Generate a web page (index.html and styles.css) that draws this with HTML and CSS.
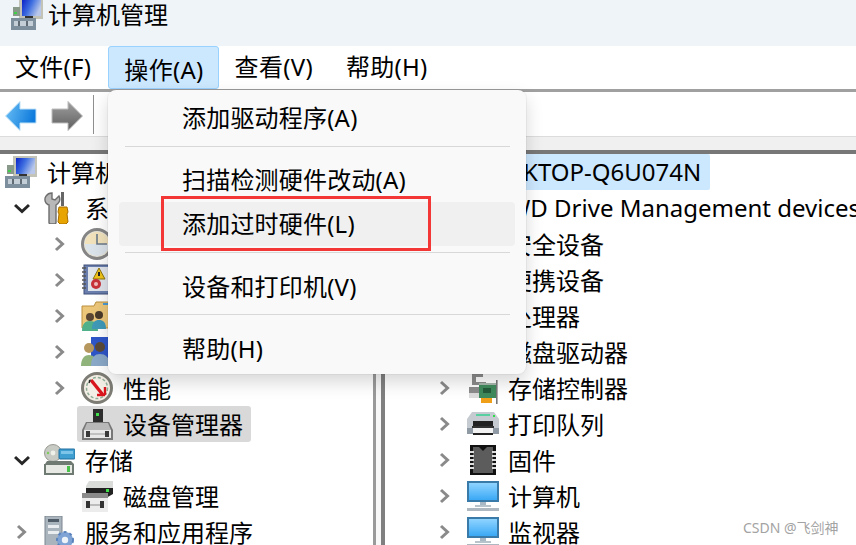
FILE: index.html
```html
<!DOCTYPE html>
<html lang="zh-CN">
<head>
<meta charset="utf-8">
<title>计算机管理</title>
<link rel="stylesheet" href="styles.css">
</head>
<body>
<svg class="defs" width="0" height="0" aria-hidden="true">
  <defs>
    <linearGradient id="scr" x1="0" y1="0" x2="1" y2="0.4"><stop offset="0" stop-color="#0a22c8"/><stop offset=".5" stop-color="#3f6fe0"/><stop offset="1" stop-color="#b9c8ea"/></linearGradient>
    <linearGradient id="mon" x1="0" y1="0" x2="0" y2="1"><stop offset="0" stop-color="#8fd3ff"/><stop offset="1" stop-color="#3aa9f5"/></linearGradient>
    <linearGradient id="arB" x1="0" y1="0" x2="1" y2="0.3"><stop offset="0" stop-color="#6cc0f5"/><stop offset="1" stop-color="#0f7bdc"/></linearGradient>
    <linearGradient id="arG" x1="0" y1="0" x2="0" y2="1"><stop offset="0" stop-color="#a0a0a0"/><stop offset="1" stop-color="#5e5e5e"/></linearGradient>
    <symbol id="i-back" viewBox="0 0 32 32"><path d="M.5 16 15 1.5V9h16v14H15v7.500z" fill="url(#arB)" stroke="#c2e2f7" stroke-width="1"/></symbol>
    <symbol id="i-fwd" viewBox="0 0 32 32"><path d="M31.500 16 17 1.500V9H1v14h16v7.500z" fill="url(#arG)" stroke="#bdbdbd" stroke-width="1"/></symbol>
    <symbol id="i-computer" viewBox="0 0 32 32">
      <rect x="8" y="0" width="24" height="21" fill="#c3c3b8"/><rect x="11" y="2" width="19" height="16" fill="url(#scr)"/>
      <rect x="2" y="9" width="7" height="9" fill="#8a9a8a"/><rect x="3" y="14" width="3" height="2" fill="#3fd04a"/>
      <rect x="14" y="18" width="8" height="3" fill="#333"/>
      <rect x="0" y="20" width="25" height="12" fill="#7d8f9c"/><rect x="3" y="23" width="19" height="5" fill="#c3ced6"/><rect x="7" y="23" width="2" height="5" fill="#5f6c75"/><rect x="15" y="23" width="2" height="5" fill="#5f6c75"/>
    </symbol>
    <symbol id="i-tools" viewBox="0 0 32 32">
      <path d="M7 32h5a2 2 0 0 0 1-2V13c3-2 5-5 3-9l-4 4-3-1V1C4 1 0 6 3 11c1 1 2 2 3 2v17a2 2 0 0 0 1 2z" fill="#b8b8b8" stroke="#6d6d6d" stroke-width="1.4"/>
      <rect x="18" y="0" width="3" height="14" fill="#666"/><path d="M16 15h8l1 5-1 2 1 8-2 2h-6l-2-2 1-8-1-2z" fill="#e8a400" stroke="#a86f00"/>
    </symbol>
    <symbol id="i-clock" viewBox="0 0 32 32">
      <circle cx="16" cy="16" r="14.500" fill="#e8e4d8" stroke="#858585" stroke-width="3"/><circle cx="16" cy="16" r="12" fill="#f1e2bb"/><path d="M4 16a12 12 0 0 0 24 0z" fill="#dbe3ea"/>
      <path d="M16 6v10h10" fill="none" stroke="#6b7a88" stroke-width="1.6"/>
    </symbol>
    <symbol id="i-log" viewBox="0 0 32 32">
      <rect x="3" y="1" width="27" height="29" fill="#6a7fae" stroke="#3f4f78"/><rect x="7" y="3" width="21" height="24" fill="#dfe3ea"/>
      <path d="M1 4h4M1 8h4M1 12h4M1 16h4M1 20h4M1 24h4" stroke="#555" stroke-width="1.5"/>
      <path d="M18 4l6 11H12z" fill="#f0c419" stroke="#8a7310"/><rect x="17" y="8" width="2" height="4" fill="#222"/>
      <circle cx="15" cy="20" r="5" fill="#c8323a"/><circle cx="15" cy="20" r="2" fill="#f0c0c0"/>
    </symbol>
    <symbol id="i-shared" viewBox="0 0 32 32">
      <path d="M1 6h12l2-4h16v26H1z" fill="#ecc77a" stroke="#b98f3c"/><rect x="22" y="3" width="6" height="2" fill="#4a9ad4"/>
      <circle cx="9" cy="17" r="4" fill="#5a4632"/><path d="M1 31c0-7 3-10 8-10s8 3 8 10z" fill="#4fb08a"/>
      <circle cx="18" cy="15" r="4" fill="#4a3a2a"/><path d="M11 29c0-7 3-9 7-9s7 2 7 9z" fill="#3f9ab8"/>
    </symbol>
    <symbol id="i-users" viewBox="0 0 32 32">
      <path d="M10 1h20v22H10z" fill="#2f56c8"/><circle cx="8" cy="12" r="5" fill="#b6985f"/><path d="M0 30c0-8 4-11 8-11s8 3 8 11z" fill="#8fb37a"/>
      <circle cx="19" cy="11" r="5" fill="#5b4a38"/><path d="M10 30c0-9 4-12 9-12s10 3 10 12z" fill="#8aa8c8"/>
    </symbol>
    <symbol id="i-perf" viewBox="0 0 32 32">
      <circle cx="16" cy="16" r="14.500" fill="#f4efe6" stroke="#7d7d75" stroke-width="3"/><circle cx="16" cy="16" r="10.500" fill="none" stroke="#8fae98" stroke-width="1.5" stroke-dasharray="3 2"/>
      <path d="M10 8l12 15" stroke="#d8141c" stroke-width="3.400"/><path d="M24 23v-8M24 23h-8" stroke="#d8141c" stroke-width="2.400" fill="none"/><path d="M9 8l-1 3" stroke="#222" stroke-width="1.500"/>
    </symbol>
    <symbol id="i-devmgr" viewBox="0 0 32 32">
      <rect x="12" y="1" width="10" height="14" fill="#2d2d2d"/><rect x="15" y="5" width="3" height="3" fill="#3fe04a"/>
      <path d="M5 14h23l4 8v10H1V22z" fill="#777"/><path d="M6 15h21l3 7H3z" fill="#b8b8b8"/><rect x="3" y="22" width="27" height="8" fill="#e9e9e9"/>
      <rect x="5" y="23" width="4" height="6" fill="#3a3a3a"/><rect x="24" y="23" width="4" height="6" fill="#3a3a3a"/><rect x="9" y="25" width="15" height="2" fill="#c2c2c2"/>
    </symbol>
    <symbol id="i-storage" viewBox="0 0 32 32">
      <circle cx="10" cy="9" r="8.500" fill="#c8cbc4" stroke="#9a9a94"/><circle cx="10" cy="9" r="2.400" fill="#eef0ea"/><circle cx="5" cy="9" r="1.200" fill="#7ecb5c"/>
      <rect x="16" y="5" width="16" height="10" rx="1" fill="#3f9fd0" stroke="#1f6f9f"/><rect x="18" y="7" width="12" height="3" fill="#7cc4e8"/>
      <path d="M2 20 4 17h24l3 3v11H1V20z" fill="#6f7a72"/><rect x="3" y="21" width="26" height="8" fill="#e7eae4"/><rect x="24" y="22" width="3" height="6" fill="#49c24a"/>
    </symbol>
    <symbol id="i-disk" viewBox="0 0 32 32">
      <path d="M8 1h24v8l-8 6H5V6z" fill="#d9dcd9"/><path d="M5 8h27v6l-7 4H5z" fill="#222"/><rect x="25" y="9" width="3" height="3" fill="#3fe04a"/>
      <rect x="1" y="13" width="26" height="5" fill="#8a8a8a"/><rect x="1" y="18" width="26" height="14" fill="#ececec"/>
      <rect x="5" y="21" width="4" height="7" fill="#333"/><rect x="19" y="21" width="4" height="7" fill="#333"/><rect x="9" y="24" width="10" height="2" fill="#bbb"/>
    </symbol>
    <symbol id="i-services" viewBox="0 0 32 32">
      <rect x="2" y="0" width="17" height="32" fill="#aab4bd" stroke="#7b8690"/><rect x="5" y="3" width="11" height="3" fill="#4f5b66"/><rect x="5" y="9" width="11" height="3" fill="#e9edf0"/><rect x="5" y="15" width="11" height="3" fill="#e9edf0"/>
      <circle cx="22" cy="24" r="8" fill="#7ea3d4"/><circle cx="22" cy="24" r="3.200" fill="#eef3f9"/><circle cx="22" cy="24" r="8" fill="none" stroke="#5a83bc" stroke-width="2" stroke-dasharray="3 3"/>
    </symbol>
    <symbol id="i-ctrl" viewBox="0 0 32 32">
      <path d="M5 2h11v3H9v5h10v3H5zM2 15h17v11H2z" fill="#8c8c8c"/><rect x="2" y="21" width="15" height="5" fill="#dcdcdc"/>
      <rect x="12" y="13" width="17" height="13" fill="#3f8a5c"/><rect x="16" y="16" width="8" height="5" fill="#245a3b"/><rect x="14" y="26" width="11" height="5" fill="#f0a018"/><rect x="29" y="8" width="1.600" height="24" fill="#777"/><path d="M12 12h17" stroke="#a8b8ae" stroke-width="2"/>
    </symbol>
    <symbol id="i-printer" viewBox="0 0 32 32">
      <path d="M5 4h22l5 7v14H0V11z" fill="#c5cbd0"/><rect x="9" y="6" width="14" height="2" fill="#58d0a0"/><rect x="26" y="7" width="2" height="2" fill="#2ee04a"/>
      <rect x="0" y="20" width="32" height="6" fill="#8f9aa4"/><path d="M6 13h20v5H6z" fill="#222"/><path d="M5 18h22v2H5z" fill="#333"/><rect x="6" y="20" width="20" height="5" fill="#f2f2f2"/><rect x="6" y="25" width="20" height="2" fill="#222"/>
    </symbol>
    <symbol id="i-chip" viewBox="0 0 32 32">
      <rect x="3" y="1" width="26" height="30" fill="#111"/><path d="M6 3h6l4 4 4-4h6v26H6z" fill="#5c5c5c"/>
      <path d="M3 8h4M3 12h4M3 16h4M3 20h4M3 24h4M25 8h4M25 12h4M25 16h4M25 20h4M25 24h4" stroke="#ddd" stroke-width="2"/>
    </symbol>
    <symbol id="i-monitor" viewBox="0 0 32 32">
      <rect x="0" y="1" width="32" height="21" fill="#3a7aa8"/><rect x="2" y="3" width="28" height="17" fill="url(#mon)"/>
      <rect x="13" y="22" width="6" height="3" fill="#a8b8c4"/><rect x="8" y="25" width="16" height="2" fill="#b8c4cc"/><rect x="0" y="28" width="32" height="3" fill="#aeb8c0"/>
    </symbol>
  </defs>
</svg>

<div class="app">
  <header class="titlebar">
    <svg class="icon title-icon"><use href="#i-computer"/></svg>
    <span class="title-text">计算机管理</span>
  </header>

  <nav class="menubar">
    <span class="menu-item first">文件(F)</span>
    <span class="menu-item active">操作(A)</span>
    <span class="menu-item">查看(V)</span>
    <span class="menu-item">帮助(H)</span>
  </nav>

  <div class="toolbar">
    <svg class="icon tool"><use href="#i-back"/></svg>
    <svg class="icon tool"><use href="#i-fwd"/></svg>
    <span class="tool-sep"></span>
  </div>

  <div class="band"></div>

  <main class="panes">
    <section class="pane left">
      <div class="row l0"><svg class="icon"><use href="#i-computer"/></svg><span class="label">计算机管理(本地)</span></div>
      <div class="row l1"><svg class="twist open" viewBox="0 0 16 16"><path d="M1 5l7 6.500L15 5"/></svg><svg class="icon"><use href="#i-tools"/></svg><span class="label">系统工具</span></div>
      <div class="row l2"><svg class="twist" viewBox="0 0 16 16"><path d="M4 2l6.500 6L4 14"/></svg><svg class="icon"><use href="#i-clock"/></svg><span class="label">任务计划程序</span></div>
      <div class="row l2"><svg class="twist" viewBox="0 0 16 16"><path d="M4 2l6.500 6L4 14"/></svg><svg class="icon"><use href="#i-log"/></svg><span class="label">事件查看器</span></div>
      <div class="row l2"><svg class="twist" viewBox="0 0 16 16"><path d="M4 2l6.500 6L4 14"/></svg><svg class="icon"><use href="#i-shared"/></svg><span class="label">共享文件夹</span></div>
      <div class="row l2"><svg class="twist" viewBox="0 0 16 16"><path d="M4 2l6.500 6L4 14"/></svg><svg class="icon"><use href="#i-users"/></svg><span class="label">本地用户和组</span></div>
      <div class="row l2"><svg class="twist" viewBox="0 0 16 16"><path d="M4 2l6.500 6L4 14"/></svg><svg class="icon"><use href="#i-perf"/></svg><span class="label">性能</span></div>
      <div class="row l2"><span class="twist"></span><span class="selected"><svg class="icon"><use href="#i-devmgr"/></svg><span class="label">设备管理器</span></span></div>
      <div class="row l1"><svg class="twist open" viewBox="0 0 16 16"><path d="M1 5l7 6.500L15 5"/></svg><svg class="icon"><use href="#i-storage"/></svg><span class="label">存储</span></div>
      <div class="row l2"><span class="twist"></span><svg class="icon"><use href="#i-disk"/></svg><span class="label">磁盘管理</span></div>
      <div class="row l1"><svg class="twist" viewBox="0 0 16 16"><path d="M4 2l6.500 6L4 14"/></svg><svg class="icon"><use href="#i-services"/></svg><span class="label">服务和应用程序</span></div>
    </section>

    <div class="splitter"></div>

    <section class="pane right">
      <div class="row l1"><span class="twist"></span><span class="root-sel"><span class="label latin">DESKTOP-Q6U074N</span></span></div>
      <div class="row l2"><span class="twist"></span><svg class="icon"><use href="#i-monitor"/></svg><span class="label latin">WD Drive Management devices</span></div>
      <div class="row l2"><span class="twist"></span><svg class="icon"><use href="#i-chip"/></svg><span class="label">安全设备</span></div>
      <div class="row l2"><span class="twist"></span><svg class="icon"><use href="#i-chip"/></svg><span class="label">便携设备</span></div>
      <div class="row l2"><span class="twist"></span><svg class="icon"><use href="#i-chip"/></svg><span class="label">处理器</span></div>
      <div class="row l2"><span class="twist"></span><svg class="icon"><use href="#i-disk"/></svg><span class="label">磁盘驱动器</span></div>
      <div class="row l2"><svg class="twist" viewBox="0 0 16 16"><path d="M4 2l6.500 6L4 14"/></svg><svg class="icon"><use href="#i-ctrl"/></svg><span class="label">存储控制器</span></div>
      <div class="row l2"><svg class="twist" viewBox="0 0 16 16"><path d="M4 2l6.500 6L4 14"/></svg><svg class="icon"><use href="#i-printer"/></svg><span class="label">打印队列</span></div>
      <div class="row l2"><svg class="twist" viewBox="0 0 16 16"><path d="M4 2l6.500 6L4 14"/></svg><svg class="icon"><use href="#i-chip"/></svg><span class="label">固件</span></div>
      <div class="row l2"><svg class="twist" viewBox="0 0 16 16"><path d="M4 2l6.500 6L4 14"/></svg><svg class="icon"><use href="#i-monitor"/></svg><span class="label">计算机</span></div>
      <div class="row l2"><svg class="twist" viewBox="0 0 16 16"><path d="M4 2l6.500 6L4 14"/></svg><svg class="icon"><use href="#i-monitor"/></svg><span class="label">监视器</span></div>
    </section>
  </main>

  <div class="dropdown">
    <div class="dd-item">添加驱动程序(A)</div>
    <div class="dd-sep s1"></div>
    <div class="dd-item">扫描检测硬件改动(A)</div>
    <div class="dd-item hot">添加过时硬件(L)</div>
    <div class="dd-sep s2"></div>
    <div class="dd-item">设备和打印机(V)</div>
    <div class="dd-sep s3"></div>
    <div class="dd-item">帮助(H)</div>
  </div>
  <div class="redbox"></div>
  <div class="watermark">CSDN @飞剑神</div>
</div>
</body>
</html>
```
FILE: styles.css
```css
* { box-sizing: border-box; }
html, body { margin: 0; padding: 0; }
body {
  width: 856px;
  height: 545px;
  overflow: hidden;
  background: #fff;
  color: #000;
  font-family: "Noto Sans", "Noto Sans CJK SC", sans-serif;
  font-size: 24px;
}
.defs { position: absolute; }
.app { position: relative; width: 856px; height: 545px; overflow: hidden; display: flex; flex-direction: column; }
.icon { width: 32px; height: 32px; flex: none; display: block; }

.titlebar { height: 46px; flex: none; background: #eff4f9; display: flex; align-items: flex-start; padding-left: 11px; overflow: hidden; }
.title-icon { margin-top: -2px; margin-right: 5px; }
.title-text { line-height: 30px; }

.menubar { height: 43px; flex: none; display: flex; background: #fff; }
.menu-item { display: flex; align-items: center; padding: 0 17px 2px 16px; line-height: 1; white-space: nowrap; letter-spacing: .3px; }
.menu-item.first { padding-left: 15px; }
.menu-item.active { padding: 4px 14px 0 15px; background: #cce8ff; border: 1px solid #99d1ff; border-radius: 3px; }

.toolbar { height: 48px; flex: none; border-top: 3px solid #a0a0a0; border-bottom: 1px solid #dcdcdc; display: flex; align-items: center; padding-left: 5px; }
.tool { margin-right: 14px; margin-top: 3px; }
.tool-sep { width: 1px; height: 39px; background: #8f8f8f; margin-left: -4px; }

.band { height: 13px; flex: none; background: #f0f0f0; }

.panes { flex: 1; display: flex; border-top: 4px solid #777; min-height: 0; }
.pane { min-width: 0; overflow: hidden; white-space: nowrap; }
.left { width: 373px; flex: none; }
.right { flex: 1; }
.splitter { width: 12px; flex: none; border-left: 3px solid #9a9a9a; border-right: 4px solid #808080; background: #f8f8f8; }

.row { height: 36px; display: flex; align-items: center; }
.l0 { padding-left: 5px; }
.l1 { padding-left: 14px; }
.l2 { padding-left: 52px; }
.twist { width: 16px; height: 16px; flex: none; margin-right: 13px; fill: none; stroke: #8a8a8a; stroke-width: 3; }
.twist.open { stroke: #262626; }
.right .twist { margin-right: 14px; }
.label { margin-left: 10px; line-height: 36px; padding-top: 1px; }
.label.latin { padding-top: 0; }
.right .label { margin-left: 9px; }
.selected { display: flex; align-items: center; height: 36px; background: #d9d9d9; border-radius: 3px; margin-left: -4px; padding-left: 4px; padding-right: 8px; }
.root-sel { height: 36px; display: flex; align-items: center; background: #cce8ff; border-radius: 2px; padding-right: 9px; margin-left: 41px; }

.dropdown {
  position: absolute;
  left: 108px;
  top: 90px;
  width: 418px;
  height: 284px;
  padding: 6px 11px 0;
  background: #f9f9f9;
  border-radius: 8px;
  box-shadow: 0 0 0 1px rgba(0,0,0,.04), 0 8px 18px rgba(0,0,0,.16);
}
.dd-item { height: 44px; line-height: 44px; padding-left: 63px; border-radius: 4px; white-space: nowrap; letter-spacing: .2px; }
.dd-item.hot { background: #f0f0f0; }
.dd-sep { height: 1px; background: #d8d8d8; margin-left: 6px; margin-right: 5px; }
.s1 { margin-top: 6px; margin-bottom: 11px; }
.s2 { margin-top: 6px; margin-bottom: 12px; }
.s3 { margin-top: 5px; margin-bottom: 12px; }

.redbox { position: absolute; left: 161px; top: 196px; width: 270px; height: 55px; border: 3px solid #f33636; }
.watermark { position: absolute; left: 743px; top: 518px; font-size: 14px; line-height: 20px; color: #a3a3a3; white-space: nowrap; }
```
